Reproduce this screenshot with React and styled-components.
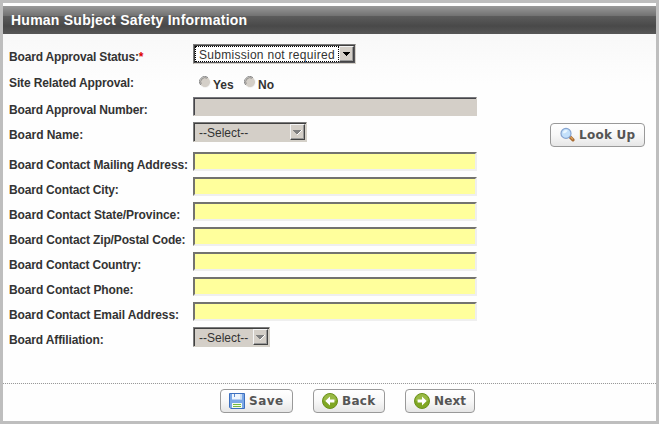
import React from "react";
import styled, { createGlobalStyle } from "styled-components";

const Global = createGlobalStyle`
  * { box-sizing: border-box; }
  body { margin: 0; background: #fff; font-family: "Liberation Sans", Arial, sans-serif; font-size: 12px; color: #333; }
`;

const Panel = styled.div`
  width: 659px;
  height: 424px;
  border: 3px solid #bebebe;
  padding-top: 3px;
  background: #fefefe;
  display: flex;
  flex-direction: column;
`;

const Title = styled.h1`
  margin: 0;
  flex: none;
  height: 28px;
  padding-left: 8px;
  font-size: 14px;
  line-height: 28px;
  letter-spacing: 0.24px;
  white-space: nowrap;
  color: #fff;
  background: linear-gradient(#999 0, #717171 10px, #5c5c5c 10px, #494949 20px, #575757 28px);
`;

const Form = styled.div`
  flex: none;
  height: 350px;
  padding-top: 10px;
  border-bottom: 1px dotted #999;
  background: linear-gradient(#f8f8f8 0, #fefefe 50px);
`;

const Row = styled.div`
  display: flex;
  align-items: flex-start;
  height: ${(p) => p.$h || 25}px;
`;

const Label = styled.label`
  flex: none;
  width: 190px;
  padding: 6px 0 0 6px;
  font-weight: bold;
  line-height: 14px;
  white-space: nowrap;
  letter-spacing: ${(p) => p.$ls || 0}px;
`;

const Required = styled.span`
  color: #d00;
`;

const Field = styled.div`
  flex: none;
  width: 284px;
  height: 19px;
  border: 2px solid;
  border-color: ${(p) => (p.$disabled ? "#77777b #d4cfc8 #d4cfc8 #77777b" : "#73736f #efefef #efefef #73736f")};
  border-width: ${(p) => (p.$disabled ? "1px" : "2px")};
  background: ${(p) => (p.$disabled ? "#d4cfc8" : "#ffff9c")};
  box-shadow: ${(p) => (p.$disabled ? "inset 1px 1px #45454a" : "none")};
`;

const Select = styled.div`
  flex: none;
  display: flex;
  width: ${(p) => p.$w}px;
  height: 20px;
  border: 1px solid;
  border-color: #7c7c7c #d4d0c8 #d4d0c8 #7c7c7c;
  box-shadow: inset 1px 1px #404040, inset -1px -1px ${(p) => (p.$disabled ? "#d4d0c8" : "#55555a")};
  padding: 1px;
  background: ${(p) => (p.$disabled ? "#d4cfc8" : "#fff")};
`;

const Value = styled.span`
  flex: 1;
  height: 16px;
  padding-left: 3px;
  line-height: 16px;
  white-space: nowrap;
  border: 1px dotted ${(p) => (p.$focus ? "#000" : "transparent")};
  letter-spacing: ${(p) => p.$ls}px;
`;

const Arrow = styled.span`
  flex: none;
  width: 15px;
  height: 16px;
  display: flex;
  align-items: center;
  justify-content: center;
  background: #d4cfc8;
  border: 1px solid;
  border-color: #f4f4f4 #444 #444 #f4f4f4;
  box-shadow: inset -1px -1px #999;
`;

const Radios = styled.div`
  display: flex;
  padding: 6px 0 0 6px;
`;

const Option = styled.div`
  display: flex;
  width: 45px;
  font-weight: bold;
  span { margin: 2px 0 0 2px; line-height: 14px; }
`;

const Button = styled.button`
  display: flex;
  align-items: center;
  flex: none;
  width: ${(p) => p.$w}px;
  height: 24px;
  margin: ${(p) => p.$m || 0};
  padding: 0 0 0 ${(p) => p.$pl || 8}px;
  gap: ${(p) => p.$gap || 4}px;
  border: 1px solid #999;
  border-radius: 4px;
  background: linear-gradient(#fff, #f8f8f8 50%, #e6e6e6);
  color: #555;
  font: bold 12px/14px "DejaVu Sans", Verdana, sans-serif;
  letter-spacing: ${(p) => p.$ls || 0}px;
  white-space: nowrap;
  svg { flex: none; }
`;

const Footer = styled.div`
  display: flex;
  gap: 20px;
  padding: 5px 0 0 217px;
`;

const Triangle = ({ disabled }) => (
  <svg width="9" height="6" viewBox="0 0 9 6" shapeRendering="crispEdges">
    {disabled && <path d="M2 1h7v1h-1v1h-1v1h-1v1h-1v1h-1z" fill="#fff" />}
    <path d={disabled ? "M0 1h8v1H7v1H6v1H5v1H3V4H2V3H1V2H0z" : "M1 1h7v1H7v1H6v1H5v1H4V4H3V3H2V2H1z"} fill={disabled ? "#808080" : "#000"} />
  </svg>
);

const RadioDot = () => (
  <svg width="12" height="12" viewBox="0 0 12 12">
    <circle cx="6" cy="6" r="5.2" fill="#d4cfc8" />
    <path d="M1.7 9A5.2 5.2 0 0 1 9 1.7" fill="none" stroke="#888" strokeWidth="1" />
    <path d="M2.2 8A4.3 4.3 0 0 1 8 2.2" fill="none" stroke="#6a6a6a" strokeWidth="0.6" />
    <path d="M10 2.5A5.2 5.2 0 0 1 2.5 10" fill="none" stroke="#f4f4f2" strokeWidth="0.7" />
  </svg>
);

const Magnifier = () => (
  <svg width="16" height="16" viewBox="0 0 16 16">
    <path d="M10 9.8l3 3" stroke="#a86b32" strokeWidth="3.3" strokeLinecap="round" />
    <path d="M10.6 10l2.4 2.4" stroke="#e0a55e" strokeWidth="1.2" />
    <circle cx="6" cy="6.4" r="5" fill="#c3e0fb" stroke="#86a4d0" strokeWidth="1.2" />
    <path d="M2.9 6.2a3.3 3.3 0 0 1 5-2.8C6.5 5.5 5.1 6.2 2.9 6.2z" fill="#eaf6ff" />
  </svg>
);

const Disk = () => (
  <svg width="16" height="16" viewBox="0 0 16 16">
    <path d="M.5.5h15v15H1.8L.5 14.2z" fill="#7aa7e6" stroke="#3c6fbe" />
    <path d="M3 1h10v5.5H3z" fill="#eef5fd" />
    <path d="M5 1h1v3H5z" fill="#5b8bd0" />
    <path d="M11 1h2v5h-2z" fill="#cddff5" />
    <path d="M3 10h10v5H3z" fill="#f3faed" />
    <path d="M4 11h8v1H4zM4 13h8v1H4z" fill="#73b840" />
  </svg>
);

const RoundArrow = ({ back }) => (
  <svg width="16" height="16" viewBox="0 0 16 16">
    <circle cx="8" cy="8" r="7.5" fill="#80a724" stroke="#6b911d" />
    <path d="M1.5 7.5a6.5 6.5 0 0 1 13 0C11 9 5 9 1.5 7.5z" fill="#98b944" />
    <path d={back ? "M3.3 8L8 3.6v3h4.4v2.8H8v3z" : "M12.7 8L8 3.6v3H3.6v2.8H8v3z"} fill="#fff" />
  </svg>
);

const contacts = [
  ["Mailing Address:", -0.11],
  ["City:", -0.16],
  ["State/Province:", -0.08],
  ["Zip/Postal Code:", -0.14],
  ["Country:", -0.18],
  ["Phone:", -0.11],
  ["Email Address:", -0.11],
];

export default function App() {
  return (
    <>
      <Global />
      <Panel>
        <Title>Human Subject Safety Information</Title>
        <Form>
          <Row $h={26}>
            <Label $ls={-0.17}>Board Approval Status:<Required>*</Required></Label>
            <Select $w={163}>
              <Value $focus $ls={0.28}>Submission not required</Value>
              <Arrow><Triangle /></Arrow>
            </Select>
          </Row>
          <Row $h={27}>
            <Label $ls={-0.12}>Site Related Approval:</Label>
            <Radios>
              <Option><RadioDot /><span>Yes</span></Option>
              <Option><RadioDot /><span>No</span></Option>
            </Radios>
          </Row>
          <Row>
            <Label $ls={-0.17}>Board Approval Number:</Label>
            <Field $disabled />
          </Row>
          <Row $h={30}>
            <Label $ls={-0.05}>Board Name:</Label>
            <Select $w={114} $disabled>
              <Value $ls={0}>--Select--</Value>
              <Arrow><Triangle disabled /></Arrow>
            </Select>
            <Button $w={95} $m="1px 0 0 243px" $pl={9} $gap={3} $ls={0.25}><Magnifier />Look Up</Button>
          </Row>
          {contacts.map(([name, ls]) => (
            <Row key={name}>
              <Label $ls={ls}>Board Contact {name}</Label>
              <Field />
            </Row>
          ))}
          <Row>
            <Label $ls={-0.13}>Board Affiliation:</Label>
            <Select $w={77} $disabled>
              <Value $ls={0}>--Select--</Value>
              <Arrow><Triangle disabled /></Arrow>
            </Select>
          </Row>
        </Form>
        <Footer>
          <Button $w={73} $ls={0.5}><Disk />Save</Button>
          <Button $w={72} $ls={0.3}><RoundArrow back />Back</Button>
          <Button $w={70} $ls={0.1}><RoundArrow />Next</Button>
        </Footer>
      </Panel>
    </>
  );
}
